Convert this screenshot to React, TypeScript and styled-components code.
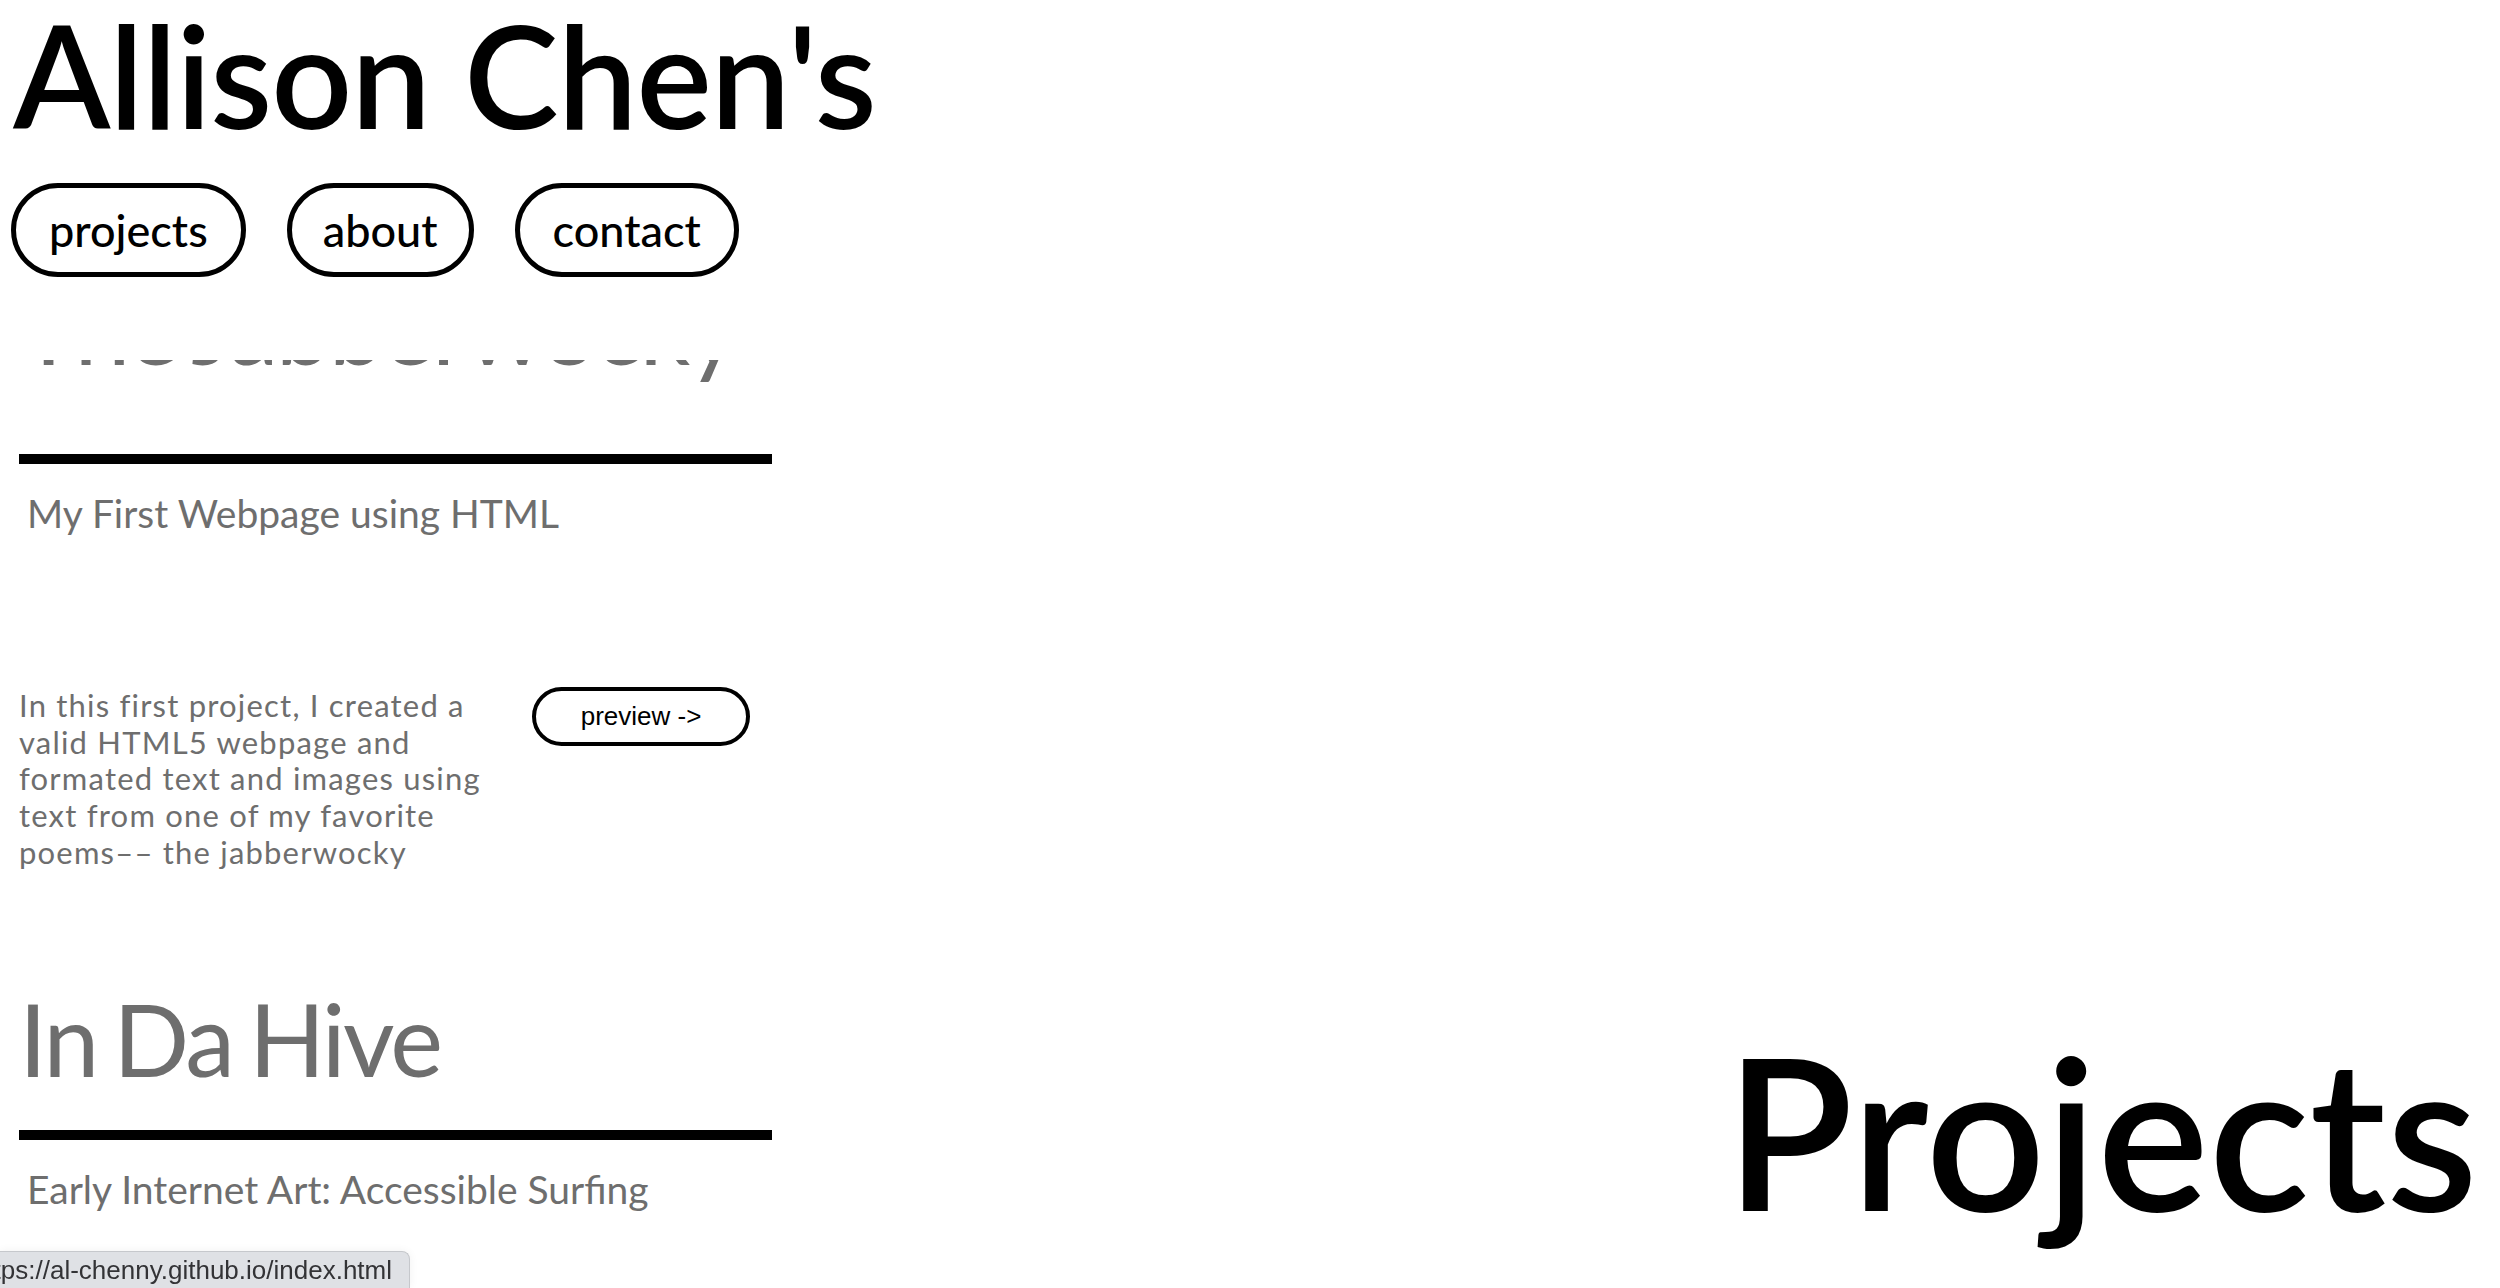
import React from 'react';
import styled, { createGlobalStyle } from 'styled-components';

const GlobalStyle = createGlobalStyle`
  html, body {
    margin: 0;
    padding: 0;
    background: #fff;
  }
  body {
    font-family: Lato, "Open Sans", sans-serif;
  }
`;

const Page = styled.div`
  height: 100vh;
  display: flex;
  flex-direction: column;
  overflow: hidden;
`;

const Header = styled.header`
  padding: 3px 11px 83px;
  background: #fff;
`;

const Title = styled.h1`
  margin: 0 0 0 2px;
  font-size: 142px;
  line-height: 142px;
  font-weight: 600;
  letter-spacing: -1px;
  color: #000;
`;

const Nav = styled.nav`
  display: flex;
  gap: 41px;
  margin-top: 38px;
`;

const NavButton = styled.a<{ $pad: number }>`
  box-sizing: border-box;
  height: 94px;
  display: flex;
  align-items: center;
  padding: 0 ${p => p.$pad}px;
  border: 5px solid #000;
  border-radius: 47px;
  font-size: 45px;
  font-weight: 500;
  color: #000;
  text-decoration: none;
`;

const Main = styled.main`
  flex: 1;
  display: grid;
  grid-template-columns: 772px 1fr;
  overflow: hidden;
`;

const ProjectList = styled.div`
  margin-top: -94px;
  padding-left: 19px;
`;

const Project = styled.section<{ $gap: number }>`
  & + & {
    margin-top: 107px;
  }
  & h2 {
    margin: 0 0 ${p => p.$gap}px;
  }
`;

const ProjectName = styled.h2`
  font-size: 100px;
  line-height: 120px;
  font-weight: 400;
  letter-spacing: -2.8px;
  word-spacing: -6px;
  color: #6e6e6e;
  white-space: nowrap;
`;

const Rule = styled.hr`
  margin: 0;
  border: 0;
  height: 10px;
  background: #000;
`;

const Subtitle = styled.h3`
  margin: 26px 0 0;
  padding-left: 8px;
  font-size: 39px;
  line-height: 46px;
  font-weight: 400;
  color: #6e6e6e;
`;

const Body = styled.div`
  display: flex;
  align-items: flex-start;
  gap: 19px;
  margin-top: 151px;
`;

const Blurb = styled.p`
  margin: 0;
  width: 494px;
  font-size: 31px;
  line-height: 36.7px;
  letter-spacing: 1.2px;
  color: #6e6e6e;
`;

const Preview = styled.a`
  box-sizing: border-box;
  flex: none;
  width: 218px;
  height: 59px;
  display: flex;
  align-items: center;
  justify-content: center;
  border: 4px solid #000;
  border-radius: 30px;
  font-family: "Liberation Sans", Arial, sans-serif;
  font-size: 26px;
  color: #000;
  text-decoration: none;
`;

const Side = styled.aside`
  display: flex;
  align-items: flex-end;
  justify-content: flex-end;
  padding: 0 22px 53px 0;
`;

const PageHeading = styled.h2`
  margin: 0;
  font-size: 210px;
  line-height: 210px;
  font-weight: 600;
  color: #000;
`;

const StatusBubble = styled.div`
  position: fixed;
  left: 0;
  bottom: 0;
  box-sizing: border-box;
  width: 410px;
  height: 37px;
  display: flex;
  align-items: center;
  justify-content: flex-end;
  padding-right: 17px;
  overflow: hidden;
  background: #dfe1e5;
  border-top: 1px solid #c6c8cc;
  border-right: 1px solid #c6c8cc;
  border-top-right-radius: 8px;
  box-shadow: 0 0 10px rgba(0, 0, 0, 0.06);
  font-family: "Liberation Sans", Arial, sans-serif;
  font-size: 26px;
  color: #333336;
  white-space: nowrap;
`;

const navItems = [
  { label: 'projects', pad: 33 },
  { label: 'about', pad: 31 },
  { label: 'contact', pad: 33 },
];

const projects = [
  {
    name: 'The Jabberwocky',
    subtitle: 'My First Webpage using HTML',
    gap: 68,
    blurb:
      'In this first project, I created a valid HTML5 webpage and formated text and images using text from one of my favorite poems–– the jabberwocky',
  },
  {
    name: 'In Da Hive',
    subtitle: 'Early Internet Art: Accessible Surfing',
    gap: 32,
    blurb: '',
  },
];

export default function App() {
  return (
    <Page>
      <GlobalStyle />
      <Header>
        <Title>Allison Chen's</Title>
        <Nav>
          {navItems.map(item => (
            <NavButton key={item.label} href="#" $pad={item.pad}>
              {item.label}
            </NavButton>
          ))}
        </Nav>
      </Header>
      <Main>
        <ProjectList>
          {projects.map(p => (
            <Project key={p.name} $gap={p.gap}>
              <ProjectName>{p.name}</ProjectName>
              <Rule />
              <Subtitle>{p.subtitle}</Subtitle>
              {p.blurb && (
                <Body>
                  <Blurb>{p.blurb}</Blurb>
                  <Preview href="#">preview -&gt;</Preview>
                </Body>
              )}
            </Project>
          ))}
        </ProjectList>
        <Side>
          <PageHeading>Projects</PageHeading>
        </Side>
      </Main>
      <StatusBubble>https://al-chenny.github.io/index.html</StatusBubble>
    </Page>
  );
}
